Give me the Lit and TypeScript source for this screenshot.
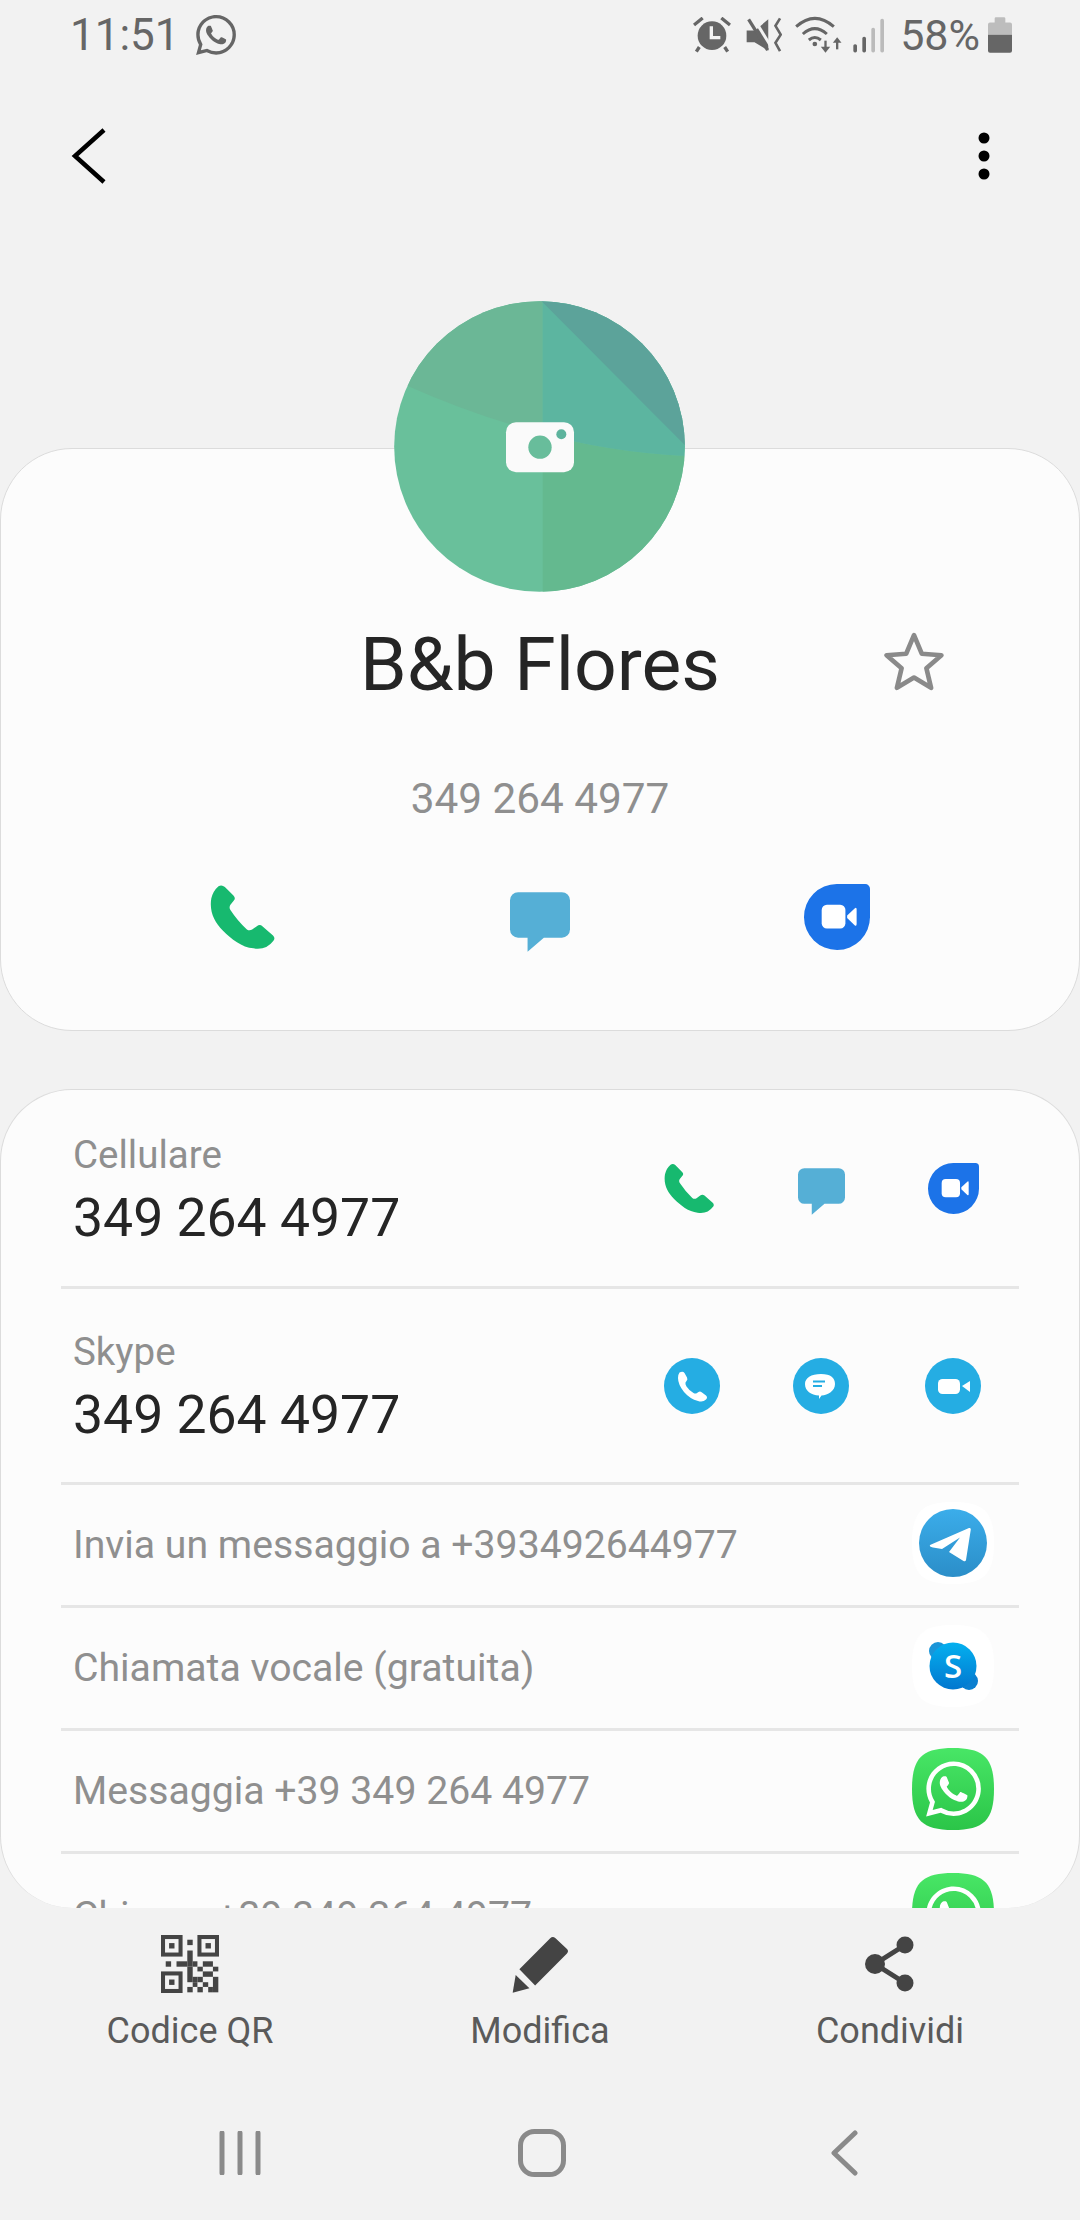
import { LitElement, html, css, svg } from "lit";
import { customElement } from "lit/decorators.js";

const WA_PATH =
  "M17.472 14.382c-.297-.149-1.758-.867-2.03-.967-.273-.099-.471-.148-.67.15-.197.297-.767.966-.94 1.164-.173.199-.347.223-.644.075-.297-.15-1.255-.463-2.39-1.475-.883-.788-1.48-1.761-1.653-2.059-.173-.297-.018-.458.13-.606.134-.133.298-.347.446-.52.149-.174.198-.298.298-.497.099-.198.05-.371-.025-.52-.075-.149-.669-1.612-.916-2.207-.242-.579-.487-.5-.669-.51-.173-.008-.371-.01-.57-.01-.198 0-.52.074-.792.372-.272.297-1.04 1.016-1.04 2.479 0 1.462 1.065 2.875 1.213 3.074.149.198 2.096 3.2 5.077 4.487.709.306 1.262.489 1.694.625.712.227 1.36.195 1.871.118.571-.085 1.758-.719 2.006-1.413.248-.694.248-1.289.173-1.413-.074-.124-.272-.198-.57-.347m-5.421 7.403h-.004a9.87 9.87 0 01-5.031-1.378l-.361-.214-3.741.982.998-3.648-.235-.374a9.86 9.86 0 01-1.51-5.26c.001-5.45 4.436-9.884 9.888-9.884 2.64 0 5.122 1.03 6.988 2.898a9.825 9.825 0 012.893 6.994c-.003 5.45-4.437 9.884-9.885 9.884m8.413-18.297A11.815 11.815 0 0012.05 0C5.495 0 .16 5.335.157 11.892c0 2.096.547 4.142 1.588 5.945L.057 24l6.305-1.654a11.882 11.882 0 005.683 1.448h.005c6.554 0 11.89-5.335 11.893-11.893a11.821 11.821 0 00-3.48-8.413Z";

const SQUIRCLE = "M41 0C72 0 82 10 82 41C82 72 72 82 41 82C10 82 0 72 0 41C0 10 10 0 41 0Z";

const phoneIcon = (w: number, h: number) => html`<svg width=${w} height=${h} viewBox="130 126 155 155">
  <path fill="#17b96f" d="M150 131Q158 127 165 133L185 153Q191 159 186 165L178 175Q174 181 178 187Q195 213 216 232Q222 237 229 233L240 225Q247 220 253 225L278 247Q284 253 279 259Q262 282 232 277C205 275 180 255 160 235C140 215 128 190 133 160Q137 142 150 131Z"/>
</svg>`;

const chatIcon = (w: number, h: number) => html`<svg width=${w} height=${h} viewBox="533 148 140 139">
  <path fill="#55afd6" d="M552 148H654a19 19 0 0 1 19 19V235a19 19 0 0 1-19 19H612L574 287V254H552a19 19 0 0 1-19-19V167a19 19 0 0 1 19-19Z"/>
</svg>`;

const duoIcon = (w: number, h: number) => html`<svg width=${w} height=${h} viewBox="922 127 153 153">
  <path fill="#1c73e8" d="M998 127H1064a11 11 0 0 1 11 11V203a76.5 76.5 0 1 1-77-76Z"/>
  <rect x="963" y="175" width="55" height="55" rx="12" fill="#fff"/>
  <path fill="#fff" d="M1022 200L1040 183Q1044 180 1044 186V220Q1044 226 1040 223L1022 206Z"/>
</svg>`;

const skypeCall = html`<svg class="nudge" width="56" height="56" viewBox="0 0 56 56">
  <circle cx="28" cy="28" r="28" fill="#25ade3"/>
  <path fill="#fff" d="M15.5 14.500Q19 13 20.500 15L23 19.500Q24 21.500 22.500 23L21.500 24.500Q21 26 22.500 28.500Q25.500 33 29.500 35Q31.500 36 33 35L34.500 34Q36 33 38 34.500L42 37.500Q44 39.500 42 41.500Q39 44.500 34 43Q26 41 20 34Q14 26.500 14 20Q14 16.500 15.500 14.500Z"/>
</svg>`;

const skypeChat = html`<svg width="56" height="56" viewBox="0 0 56 56">
  <circle cx="28" cy="28" r="28" fill="#25ade3"/>
  <path fill="#fff" d="M28 16C38 16 42 20 42 26C42 33 35 37 28.500 37.500L26 41V37.500C18 37 12 33 12 26C12 20 18 16 28 16Z"/>
  <path d="M20 23.500H32M20 28H29" stroke="#25ade3" stroke-width="2" fill="none"/>
</svg>`;

const skypeVideo = html`<svg width="56" height="56" viewBox="0 0 56 56">
  <circle cx="28" cy="28" r="28" fill="#25ade3"/>
  <rect x="13" y="21" width="22" height="15" rx="4.500" fill="#fff"/>
  <path fill="#fff" d="M37 28L45 23V34Z"/>
</svg>`;

const telegramIcon = html`<svg width="82" height="82" viewBox="0 0 82 82">
  <defs><linearGradient id="tg" x1="0" y1="0" x2="0" y2="1"><stop offset="0" stop-color="#3badea"/><stop offset="1" stop-color="#2b8ec8"/></linearGradient></defs>
  <path d=${SQUIRCLE} fill="#fff"/>
  <circle cx="41" cy="41" r="34" fill="url(#tg)"/>
  <path fill="#fff" d="M18 43L57 26Q59 25.500 58.800 27.500L54 58Q53.500 60 51.500 59L37 50L48 35.500L30 47L21 45.500Q17 44.500 18 43Z"/>
</svg>`;

const skypeIcon = html`<svg width="82" height="82" viewBox="0 0 82 82">
  <defs><linearGradient id="sk" x1="0" y1="0" x2="0" y2="1"><stop offset="0" stop-color="#04b0ef"/><stop offset="1" stop-color="#0277cf"/></linearGradient></defs>
  <path d=${SQUIRCLE} fill="#fff"/>
  <circle cx="26" cy="26" r="9" fill="#1a95d8"/>
  <circle cx="57" cy="56" r="9" fill="#0b7fd0"/>
  <circle cx="41" cy="41" r="23.500" fill="url(#sk)"/>
  <text x="41" y="52.500" text-anchor="middle" font-family="Open Sans, Roboto, sans-serif" font-size="33" font-weight="600" fill="#fff">S</text>
</svg>`;

const whatsappIcon = html`<svg width="82" height="82" viewBox="0 0 82 82">
  <defs><linearGradient id="wa" x1="0" y1="0" x2="0" y2="1"><stop offset="0" stop-color="#48e666"/><stop offset="1" stop-color="#2bc548"/></linearGradient></defs>
  <path d=${SQUIRCLE} fill="url(#wa)"/>
  <svg x="14" y="13" width="55" height="56" viewBox="0 0 24 24"><path fill="#fff" d=${WA_PATH}/></svg>
</svg>`;

// Code tile of the bottom bar: three finder squares plus the loose modules.
const QR_MODULES: [number, number, number, number][] = [
  [112, 48, 16, 16], [112, 80, 16, 48], [48, 112, 16, 16], [80, 112, 32, 16],
  [128, 112, 14, 16], [158, 112, 30, 16], [112, 128, 16, 46], [142, 128, 16, 14],
  [188, 128, 16, 14], [158, 142, 30, 16], [128, 158, 14, 16], [142, 158, 16, 16],
  [188, 158, 16, 46], [128, 174, 14, 14], [158, 174, 16, 14], [112, 188, 16, 16],
  [142, 188, 16, 16], [174, 188, 14, 16],
];

const QR_FINDERS = [[34, 34], [142, 34], [34, 142]];

const qrIcon = html`<svg width="58" height="58" viewBox="34 34 172 172">
  ${QR_FINDERS.map(
    ([x, y]) => svg`
      <rect x=${x + 6} y=${y + 6} width="52" height="52" fill="none" stroke="#444" stroke-width="12"/>
      <rect x=${x + 24} y=${y + 24} width="16" height="16" fill="#444"/>`
  )}
  ${QR_MODULES.map(([x, y, w, h]) => svg`<rect x=${x} y=${y} width=${w} height=${h} fill="#444"/>`)}
</svg>`;

@customElement("app-root")
export class AppRoot extends LitElement {
  static styles = css`
    :host {
      display: flex;
      flex-direction: column;
      width: 1080px;
      height: 2220px;
      overflow: hidden;
      background: #f2f2f2;
      font-family: Roboto, sans-serif;
    }
    svg { display: block; }

    .status {
      height: 70px;
      display: flex;
      align-items: center;
      justify-content: space-between;
      padding: 0 68px 0 70px;
      color: #666;
      font-size: 44px;
      flex: none;
    }
    .status-left, .status-right { display: flex; align-items: center; }
    .status-left { gap: 16px; }
    .status-right { gap: 12px; }
    .status-pct { font-size: 43px; margin: 0 -4px 0 4px; }

    .toolbar {
      height: 170px;
      flex: none;
      box-sizing: border-box;
      display: flex;
      align-items: center;
      justify-content: space-between;
      padding: 2px 90px 0 71px;
    }

    .hero {
      position: relative;
      flex: none;
      margin-top: 208px;
      height: 583px;
      box-sizing: border-box;
      background: #fcfcfc;
      border: 1px solid #dcdcdc;
      border-radius: 72px;
      display: flex;
      flex-direction: column;
    }
    .avatar { position: absolute; left: 393px; top: -148px; }
    .name-row {
      margin-top: 171px;
      display: grid;
      grid-template-columns: 1fr auto 1fr;
      align-items: center;
    }
    .name { grid-column: 2; font-size: 75px; line-height: 88px; color: #252525; }
    .star { grid-column: 3; justify-self: end; margin: 0 135px 5px 0; }
    .hero-phone {
      margin-top: 67px;
      text-align: center;
      font-size: 42.300px;
      line-height: 48px;
      color: #8f8f8f;
    }
    .hero-actions {
      margin-top: 58px;
      display: grid;
      grid-template-columns: repeat(3, 297px);
      justify-content: center;
      justify-items: center;
      align-items: center;
      height: 70px;
    }
    .hero-chat { margin-top: 11px; }

    .list {
      flex: none;
      margin-top: 58px;
      height: 819px;
      box-sizing: border-box;
      background: #fcfcfc;
      border: 1px solid #dcdcdc;
      border-bottom: none;
      border-radius: 72px;
      overflow: hidden;
      padding: 0 60px;
    }
    .row {
      display: flex;
      align-items: center;
      justify-content: space-between;
      box-sizing: border-box;
      border-bottom: 3px solid #e6e6e6;
    }
    .row.tall { height: 196px; }
    .row.tall:first-child { height: 199px; }
    .row.short { height: 123px; }
    .row:last-child { border-bottom: none; }
    .text { padding: 5px 0 0 12px; }
    .label { font-size: 38.500px; line-height: 46px; color: #8f8f8f; }
    .value { margin-top: 8px; font-size: 53.500px; line-height: 64px; color: #252525; }
    .plain { font-size: 39.200px; color: #8f8f8f; padding-left: 12px; }
    .icons { display: grid; grid-template-columns: repeat(3, 132px); justify-items: center; align-items: center; }
    .list-chat { margin-top: 6px; }
    .nudge { margin-left: 5px; }
    .single { width: 132px; display: flex; justify-content: center; margin-bottom: 4px; }

    .actions {
      flex: none;
      display: grid;
      grid-template-columns: repeat(3, 350px);
      justify-content: center;
      justify-items: center;
      padding-top: 27px;
    }
    .action { display: flex; flex-direction: column; align-items: center; }
    .action-icon { height: 58px; display: flex; align-items: center; }
    .action-label { margin-top: 16px; font-size: 36px; line-height: 44px; color: #5a5a5a; }

    .nav {
      flex: none;
      margin-top: 76px;
      padding-left: 4px;
      display: grid;
      grid-template-columns: repeat(3, 302px);
      justify-content: center;
      justify-items: center;
      align-items: center;
    }
  `;

  private row2(label: string, icons: unknown[]) {
    return html`<div class="row tall">
      <div class="text">
        <div class="label">${label}</div>
        <div class="value">349 264 4977</div>
      </div>
      <div class="icons">${icons}</div>
    </div>`;
  }

  private row1(text: string, icon: unknown) {
    return html`<div class="row short">
      <div class="plain">${text}</div>
      <div class="single">${icon}</div>
    </div>`;
  }

  private statusBar() {
    return html`<div class="status">
      <div class="status-left">
        <span>11:51</span>
        <svg width="40" height="40" viewBox="0 0 24 24"><path fill="#666" d=${WA_PATH}/></svg>
      </div>
      <div class="status-right">
        <svg width="38" height="36" viewBox="33 22 114 108">
          <circle cx="90" cy="78" r="43" fill="#666"/>
          <path d="M88 50V84H115" stroke="#f2f2f2" stroke-width="10" fill="none"/>
          <path d="M36 46L62 25M144 46L118 25M52 112L43 126M128 112L137 126" stroke="#666" stroke-width="10" fill="none"/>
        </svg>
        <svg width="36" height="36" viewBox="188 22 110 108" style="margin-left:3px">
          <path fill="#666" d="M190 62H216L256 28V124L214 98H190Z"/>
          <path d="M212 26L270 120" stroke="#f2f2f2" stroke-width="9" fill="none"/>
          <path d="M196 28L254 122" stroke="#666" stroke-width="10" fill="none"/>
          <path d="M292 25L278 48L294 75L278 100L292 125" stroke="#666" stroke-width="8" fill="none"/>
        </svg>
        <svg width="49" height="38" viewBox="336 18 146 114">
          <path d="M342 50Q398 0 455 50M362 72Q398 40 434 72M380 90Q398 75 416 90" stroke="#666" stroke-width="9" fill="none"/>
          <circle cx="398" cy="102" r="7" fill="#666"/>
          <path d="M430 92V118" stroke="#666" stroke-width="7"/>
          <path d="M416 110L430 128L444 110Z" fill="#666"/>
          <path d="M465 118V92" stroke="#666" stroke-width="7"/>
          <path d="M452 98L465 82L478 98Z" fill="#666"/>
        </svg>
        <svg width="31" height="35" viewBox="517 26 93 104" style="margin-left:-2px">
          <rect x="518" y="104" width="11" height="25" rx="5" fill="#666"/>
          <rect x="545" y="82" width="11" height="47" rx="5" fill="#666"/>
          <rect x="572" y="55" width="11" height="74" rx="5" fill="#bbb"/>
          <rect x="599" y="28" width="11" height="101" rx="5" fill="#bbb"/>
        </svg>
        <span class="status-pct">58%</span>
        <svg width="24" height="36" viewBox="925 22 72 107">
          <path fill="#bdbdbd" d="M945 26Q945 22 949 22H973Q977 22 977 26V38H991Q997 38 997 44V75H925V44Q925 38 931 38H945Z"/>
          <path fill="#666" d="M925 75H997V123Q997 129 991 129H931Q925 129 925 123Z"/>
        </svg>
      </div>
    </div>`;
  }

  render() {
    return html`
      ${this.statusBar()}
      <div class="toolbar">
        <svg width="36" height="56" viewBox="0 0 36 56">
          <path d="M33 2L4 28L33 54" stroke="#000" stroke-width="4.500" fill="none"/>
        </svg>
        <svg width="12" height="48" viewBox="0 0 12 48">
          <circle cx="6" cy="6" r="5.500"/><circle cx="6" cy="24" r="5.500"/><circle cx="6" cy="42" r="5.500"/>
        </svg>
      </div>

      <section class="hero">
        <svg class="avatar" width="291" height="291" viewBox="162 93 873 872">
          <defs><clipPath id="disc"><circle cx="598.500" cy="529" r="436"/></clipPath></defs>
          <g clip-path="url(#disc)">
            <rect x="150" y="80" width="900" height="900" fill="#69c09b"/>
            <path fill="#6bb796" d="M150 322L205 348Q400 435 608 490V80H150Z"/>
            <path fill="#64b98f" d="M608 490Q800 545 1040 558V980H608Z"/>
            <path fill="#5cb5a0" d="M608 490Q800 545 1040 558V80H608Z"/>
            <path fill="#5ca39a" d="M605 93L1040 530V80H605Z"/>
          </g>
          <rect x="498" y="456" width="204" height="150" rx="30" fill="#fafafa"/>
          <circle cx="600" cy="531" r="35" fill="#68bd9b"/>
          <circle cx="664" cy="492" r="15" fill="#5db39d"/>
        </svg>
        <div class="name-row">
          <div class="name">B&amp;b Flores</div>
          <svg class="star" width="60" height="60" viewBox="1 1 58 58">
            <path d="M30 4L37.500 22L56.500 23.500L42 36L46.500 55L30 45L13.500 55L18 36L3.500 23.500L22.500 22Z" stroke="#8a8a8a" stroke-width="4.500" stroke-linejoin="round" fill="none"/>
          </svg>
        </div>
        <div class="hero-phone">349 264 4977</div>
        <div class="hero-actions">
          ${phoneIcon(66, 66)}
          <div class="hero-chat">${chatIcon(60, 60)}</div>
          ${duoIcon(66, 66)}
        </div>
      </section>

      <section class="list">
        ${this.row2("Cellulare", [
          phoneIcon(51, 51),
          html`<div class="list-chat">${chatIcon(47, 47)}</div>`,
          duoIcon(51, 51),
        ])}
        ${this.row2("Skype", [skypeCall, skypeChat, skypeVideo])}
        ${this.row1("Invia un messaggio a +393492644977", telegramIcon)}
        ${this.row1("Chiamata vocale (gratuita)", skypeIcon)}
        ${this.row1("Messaggia +39 349 264 4977", whatsappIcon)}
        ${this.row1("Chiama +39 349 264 4977", whatsappIcon)}
      </section>

      <div class="actions">
        <div class="action">
          <div class="action-icon">${qrIcon}</div>
          <div class="action-label">Codice QR</div>
        </div>
        <div class="action">
          <div class="action-icon">
            <svg width="57" height="57" viewBox="36 34 170 170">
              <path fill="#444" d="M150 41Q157 33 165 40L200 73Q206 79 200 86L105 182L58 133Z"/>
              <path fill="#444" d="M47 150L88 190L38 203Z"/>
            </svg>
          </div>
          <div class="action-label">Modifica</div>
        </div>
        <div class="action">
          <div class="action-icon">
            <svg width="50" height="56" viewBox="0 0 50 56">
              <path d="M40 9L10 28L40 47" stroke="#444" stroke-width="5" fill="none"/>
              <circle cx="40" cy="9" r="8.500" fill="#444"/>
              <circle cx="10" cy="28" r="10" fill="#444"/>
              <circle cx="40" cy="47" r="8.500" fill="#444"/>
            </svg>
          </div>
          <div class="action-label">Condividi</div>
        </div>
      </div>

      <div class="nav">
        <svg width="42" height="44" viewBox="0 0 42 44">
          <path d="M3 2V42M21 2V42M39 2V42" stroke="#8a8a8a" stroke-width="5" stroke-linecap="round" fill="none"/>
        </svg>
        <svg width="48" height="48" viewBox="0 0 48 48">
          <rect x="2.500" y="2.500" width="43" height="43" rx="14" stroke="#8a8a8a" stroke-width="5" fill="none"/>
        </svg>
        <svg width="28" height="46" viewBox="0 0 28 46">
          <path d="M25 3L4 23L25 43" stroke="#8a8a8a" stroke-width="5" stroke-linecap="round" stroke-linejoin="round" fill="none"/>
        </svg>
      </div>
    `;
  }
}
